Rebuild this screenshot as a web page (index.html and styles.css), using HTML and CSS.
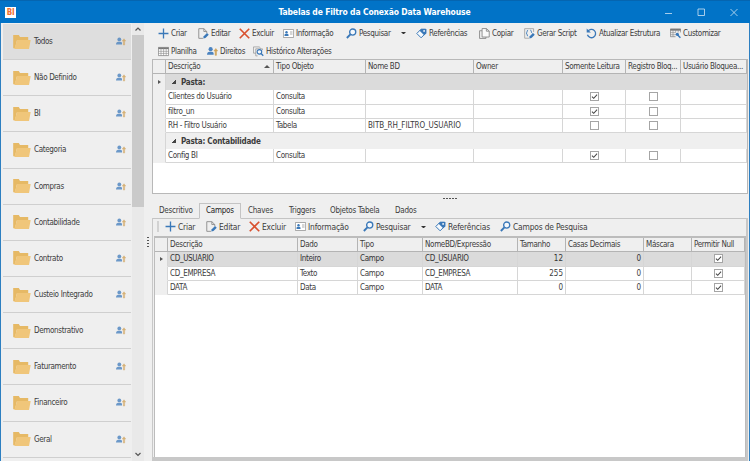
FILE: index.html
```html
<!DOCTYPE html>
<html lang="pt-BR">
<head>
    <meta charset="UTF-8">
    <meta name="viewport" content="width=device-width, initial-scale=1.0">
    <title>Tabelas de Filtro da Conexão Data Warehouse</title>
    <link rel="stylesheet" href="styles.css">
</head>
<body>
    <!-- Icon set -->
    <svg class="sprite" aria-hidden="true">
        <symbol id="folder" viewBox="0 0 18 16">
            <path d="M.2 14.3V1h5.6l1.2 2h8.2v3H4L2 14.3z" fill="#e6b965"/>
            <path d="M4.1 6.1h13.6L16 15H1.3z" fill="#f0c67a"/>
        </symbol>
        <symbol id="rights" viewBox="0 0 10 9">
            <circle cx="3.3" cy="2.4" r="1.9" fill="#4b83c0"/>
            <path d="M0 7.5C0 5.8 1 5 2.2 4.8h2.2c1 .2 1.5.7 1.6 1.3v1.4z" fill="#4b83c0"/>
            <path d="M8 1.8L6.3 4h1.1v4h1.2V4h1.1z" fill="#d0a35a" stroke="#d0a35a" stroke-width=".5"/>
        </symbol>
        <symbol id="plus" viewBox="0 0 10 10">
            <path d="M5 .5v9M.5 5h9" stroke="#3a78b8" stroke-width="1.2"/>
        </symbol>
        <symbol id="edit" viewBox="0 0 10 10">
            <path d="M4.5 9.4H.7V.6h4.6L8 3.2v1.5M5.3.6v2.6H8" fill="none" stroke="#8a8a8a" stroke-width=".8"/>
            <path d="M4.8 9.6l.4-2 3-3 1.6 1.6-3 3z" fill="#3a78b8"/>
        </symbol>
        <symbol id="delete" viewBox="0 0 10 10">
            <path d="M.7.7l8.6 8.6M9.3.7L.7 9.3" stroke="#d9512f" stroke-width="1.5"/>
        </symbol>
        <symbol id="info" viewBox="0 0 11 9">
            <path d="M.4.5h10.2v8H.4z" fill="#fff" stroke="#888" stroke-width=".7"/>
            <circle cx="3.5" cy="3.2" r="1.2" fill="#3a78b8"/>
            <path d="M1.5 7V5.6l1-.8h2l1 .8V7z" fill="#3a78b8"/>
            <path d="M7 3h2.5M7 5h2.5" stroke="#888" stroke-width=".7"/>
        </symbol>
        <symbol id="search" viewBox="0 0 10 10">
            <circle cx="6.1" cy="3.7" r="2.8" fill="#f4f8fc" stroke="#3a78b8" stroke-width="1.2"/>
            <path d="M4 5.8L.8 9.1" stroke="#3a78b8" stroke-width="1.7"/>
        </symbol>
        <symbol id="tag" viewBox="0 0 11 11">
            <path d="M5 1.2L.8 5.5l4.3 4.3 4.6-4.6V1.2z" fill="#f6f9fc" stroke="#3a78b8" stroke-width="1"/>
            <path d="M5.3 1h5v4.5L8.2 7.3 3.6 2.7z" fill="#3a78b8"/>
            <circle cx="8.1" cy="2.9" r=".9" fill="#fff"/>
        </symbol>
        <symbol id="copy" viewBox="0 0 10 10">
            <path d="M2.8 2.5H.5v7h5.8V8.2" fill="none" stroke="#888" stroke-width=".8"/>
            <path d="M2.8.5h4l2.5 2.3v5.4H2.8zM6.7.5v2.4h2.6" fill="#fafafa" stroke="#888" stroke-width=".8"/>
        </symbol>
        <symbol id="script" viewBox="0 0 10 10">
            <path d="M4.5 9.3H.6V.6h8.1v3" fill="none" stroke="#999" stroke-width=".7"/>
            <path d="M3.7 2C2.3 2 3.4 4.2 2 4.7c1.4.4.3 2.6 1.7 2.6M5.8 2c1.4 0 .3 2.2 1.7 2.7" fill="none" stroke="#3a78b8" stroke-width=".9"/>
            <path d="M4.8 9.6l.4-2 3-3 1.6 1.6-3 3z" fill="#3a78b8"/>
        </symbol>
        <symbol id="refresh" viewBox="0 0 10 10">
            <path d="M1.7 3A3.8 3.8 0 1 1 1.3 6.2" fill="none" stroke="#3a78b8" stroke-width="1.2"/>
            <path d="M.6.5v3.7h3.8z" fill="#3a78b8"/>
        </symbol>
        <symbol id="sheet" viewBox="0 0 11 9">
            <path d="M.4.4h10.2v8.2H.4z" fill="#fff" stroke="#777" stroke-width=".7"/>
            <path d="M.4 1.3h10.2" stroke="#777" stroke-width="1.7"/>
            <path d="M.4 4.3h10.2M.4 6.4h10.2M3 1v7.5M5.6 1v7.5M8.2 1v7.5" stroke="#888" stroke-width=".6"/>
        </symbol>
        <symbol id="custom" viewBox="0 0 11 10">
            <path d="M5.5 8.2H.4V.4h10.2v3.5" fill="none" stroke="#777" stroke-width=".7"/>
            <path d="M.4 1.3h10.2" stroke="#777" stroke-width="1.7"/>
            <path d="M.4 4.1h5.3M.4 6.2h5.3M3 1v7M5.6 1v3M8.2 1v3" stroke="#888" stroke-width=".6"/>
            <path d="M7.4 6.3l3 3" stroke="#3a78b8" stroke-width="1.5"/>
            <circle cx="7.3" cy="5.8" r="1.6" fill="#3a78b8"/>
        </symbol>
        <symbol id="history" viewBox="0 0 12 11">
            <path d="M3 7.3H.5V.5h6.3l1.7 1.6M10.3 4V2.6H3v7.7h2" fill="none" stroke="#888" stroke-width=".7"/>
            <circle cx="7" cy="5.9" r="2.5" fill="#f4f8fc" stroke="#3a78b8" stroke-width="1.2"/>
            <path d="M8.8 7.7l2.4 2.5" stroke="#3a78b8" stroke-width="1.5"/>
        </symbol>
    </svg>

    <div class="window">
        <header class="titlebar">
            <span class="logo">BI</span>
            <h1>Tabelas de Filtro da Conexão Data Warehouse</h1>
            <svg class="window-buttons" viewBox="0 0 74 9">
                <path d="M1 5.5h7M34 1h6.5v6.5H34zM66.5 1l7 7M73.5 1l-7 7"/>
            </svg>
        </header>

        <div class="content">
            <nav class="sidebar">
                <div class="folder active"><svg class="folder-icon"><use href="#folder"/></svg><span>Todos</span><svg class="rights-icon"><use href="#rights"/></svg></div>
                <div class="folder"><svg class="folder-icon"><use href="#folder"/></svg><span>Não Definido</span><svg class="rights-icon"><use href="#rights"/></svg></div>
                <div class="folder"><svg class="folder-icon"><use href="#folder"/></svg><span>BI</span><svg class="rights-icon"><use href="#rights"/></svg></div>
                <div class="folder"><svg class="folder-icon"><use href="#folder"/></svg><span>Categoria</span><svg class="rights-icon"><use href="#rights"/></svg></div>
                <div class="folder"><svg class="folder-icon"><use href="#folder"/></svg><span>Compras</span><svg class="rights-icon"><use href="#rights"/></svg></div>
                <div class="folder"><svg class="folder-icon"><use href="#folder"/></svg><span>Contabilidade</span><svg class="rights-icon"><use href="#rights"/></svg></div>
                <div class="folder"><svg class="folder-icon"><use href="#folder"/></svg><span>Contrato</span><svg class="rights-icon"><use href="#rights"/></svg></div>
                <div class="folder"><svg class="folder-icon"><use href="#folder"/></svg><span>Custeio Integrado</span><svg class="rights-icon"><use href="#rights"/></svg></div>
                <div class="folder"><svg class="folder-icon"><use href="#folder"/></svg><span>Demonstrativo</span><svg class="rights-icon"><use href="#rights"/></svg></div>
                <div class="folder"><svg class="folder-icon"><use href="#folder"/></svg><span>Faturamento</span><svg class="rights-icon"><use href="#rights"/></svg></div>
                <div class="folder"><svg class="folder-icon"><use href="#folder"/></svg><span>Financeiro</span><svg class="rights-icon"><use href="#rights"/></svg></div>
                <div class="folder"><svg class="folder-icon"><use href="#folder"/></svg><span>Geral</span><svg class="rights-icon"><use href="#rights"/></svg></div>
            </nav>
            <div class="scrollbar">
                <svg class="arrow" viewBox="0 0 12 12"><path d="M3.5 7.5L6 5l2.5 2.5"/></svg>
                <div class="thumb"></div>
                <svg class="arrow" viewBox="0 0 12 12"><path d="M3.5 4L6 6.5 8.5 4"/></svg>
            </div>
            <div class="splitter"><i></i><i></i><i></i><i></i></div>

            <main class="main">
                <div class="toolbar toolbar-top">
                    <div class="btn"><svg><use href="#plus"/></svg><span>Criar</span></div>
                    <div class="btn"><svg><use href="#edit"/></svg><span>Editar</span></div>
                    <div class="btn"><svg><use href="#delete"/></svg><span>Excluir</span></div>
                    <div class="btn"><svg><use href="#info"/></svg><span>Informação</span></div>
                    <div class="btn"><svg><use href="#search"/></svg><span>Pesquisar</span></div>
                    <div class="caret"></div>
                    <div class="btn"><svg><use href="#tag"/></svg><span>Referências</span></div>
                    <div class="btn"><svg><use href="#copy"/></svg><span>Copiar</span></div>
                    <div class="btn"><svg><use href="#script"/></svg><span>Gerar Script</span></div>
                    <div class="btn"><svg><use href="#refresh"/></svg><span>Atualizar Estrutura</span></div>
                    <div class="btn"><svg><use href="#custom"/></svg><span>Customizar</span></div>
                </div>
                <div class="toolbar toolbar-second">
                    <div class="btn"><svg><use href="#sheet"/></svg><span>Planilha</span></div>
                    <div class="btn"><svg><use href="#rights"/></svg><span>Direitos</span></div>
                    <div class="btn"><svg><use href="#history"/></svg><span>Histórico Alterações</span></div>
                </div>

                <div class="grid grid-filters">
                    <div class="row head">
                        <b></b><b>Descrição<i class="sort"></i></b><b>Tipo Objeto</b><b>Nome BD</b><b>Owner</b><b>Somente Leitura</b><b>Registro Bloq...</b><b>Usuário Bloquea...</b>
                    </div>
                    <div class="group current"><i class="marker"></i><div><i class="expand"></i>Pasta:</div></div>
                    <div class="row"><b></b><b>Clientes do Usuário</b><b>Consulta</b><b></b><b></b><b class="check"><svg class="box on" viewBox="0 0 9 9"><path d="M1.2 4.6L3.5 6.8 7.8 2"/></svg></b><b class="check"><svg class="box"></svg></b><b></b></div>
                    <div class="row"><b></b><b>filtro_un</b><b>Consulta</b><b></b><b></b><b class="check"><svg class="box on" viewBox="0 0 9 9"><path d="M1.2 4.6L3.5 6.8 7.8 2"/></svg></b><b class="check"><svg class="box"></svg></b><b></b></div>
                    <div class="row"><b></b><b>RH - Filtro Usuário</b><b>Tabela</b><b class="code">BITB_RH_FILTRO_USUARIO</b><b></b><b class="check"><svg class="box"></svg></b><b class="check"><svg class="box"></svg></b><b></b></div>
                    <div class="group"><i></i><div><i class="expand"></i>Pasta: Contabilidade</div></div>
                    <div class="row"><b></b><b>Config BI</b><b>Consulta</b><b></b><b></b><b class="check"><svg class="box on" viewBox="0 0 9 9"><path d="M1.2 4.6L3.5 6.8 7.8 2"/></svg></b><b class="check"><svg class="box"></svg></b><b></b></div>
                </div>

                <div class="splitter-h"><i></i><i></i><i></i><i></i><i></i></div>

                <div class="tabs">
                    <span>Descritivo</span><span class="active">Campos</span><span>Chaves</span><span>Triggers</span><span>Objetos Tabela</span><span>Dados</span>
                </div>

                <section class="panel">
                    <div class="toolbar toolbar-fields">
                        <div class="grip"></div>
                        <div class="btn"><svg><use href="#plus"/></svg><span>Criar</span></div>
                        <div class="btn"><svg><use href="#edit"/></svg><span>Editar</span></div>
                        <div class="btn"><svg><use href="#delete"/></svg><span>Excluir</span></div>
                        <div class="btn"><svg><use href="#info"/></svg><span>Informação</span></div>
                        <div class="btn"><svg><use href="#search"/></svg><span>Pesquisar</span></div>
                        <div class="caret"></div>
                        <div class="btn"><svg><use href="#tag"/></svg><span>Referências</span></div>
                        <div class="btn"><svg><use href="#search"/></svg><span>Campos de Pesquisa</span></div>
                    </div>
                    <div class="grid grid-fields">
                        <div class="row head">
                            <b></b><b>Descrição</b><b>Dado</b><b>Tipo</b><b>NomeBD/Expressão</b><b>Tamanho</b><b>Casas Decimais</b><b>Máscara</b><b>Permitir Null</b>
                        </div>
                        <div class="row selected"><b><i class="marker"></i></b><b>CD_USUARIO</b><b>Inteiro</b><b>Campo</b><b>CD_USUARIO</b><b class="num">12</b><b class="num">0</b><b></b><b class="check"><svg class="box on" viewBox="0 0 9 9"><path d="M1.2 4.6L3.5 6.8 7.8 2"/></svg></b></div>
                        <div class="row"><b></b><b>CD_EMPRESA</b><b>Texto</b><b>Campo</b><b>CD_EMPRESA</b><b class="num">255</b><b class="num">0</b><b></b><b class="check"><svg class="box on" viewBox="0 0 9 9"><path d="M1.2 4.6L3.5 6.8 7.8 2"/></svg></b></div>
                        <div class="row"><b></b><b>DATA</b><b>Data</b><b>Campo</b><b>DATA</b><b class="num">0</b><b class="num">0</b><b></b><b class="check"><svg class="box on" viewBox="0 0 9 9"><path d="M1.2 4.6L3.5 6.8 7.8 2"/></svg></b></div>
                    </div>
                </section>
            </main>
        </div>
    </div>
</body>
</html>
```
FILE: styles.css
```css
* {
    margin: 0;
    padding: 0;
    box-sizing: border-box;
}

body {
    font-family: Tahoma, 'DejaVu Sans Condensed', 'DejaVu Sans', sans-serif;
    font-stretch: condensed;
    font-size: 8px;
    letter-spacing: -0.33px;
    color: #3c3c3c;
    overflow: hidden;
}

.sprite {
    display: none;
}

.window {
    width: 750px;
    height: 461px;
    background: #efefef;
    border: solid #2d7fc1;
    border-width: 0 1px;
    display: flex;
    flex-direction: column;
}

/* Title bar */
.titlebar {
    height: 23px;
    margin: 0 -1px;
    background: #0173c7;
    border-top: 1px solid #0565b0;
    display: flex;
    align-items: center;
    padding: 0 12px 0 5px;
    flex: none;
}

.logo {
    width: 11px;
    height: 11px;
    background: #fff;
    color: #f07030;
    font-size: 8px;
    font-weight: bold;
    line-height: 11px;
    text-align: center;
}

.titlebar h1 {
    flex: 1;
    text-align: center;
    padding-left: 69px;
    color: #fff;
    font-size: 8.5px;
    letter-spacing: -0.14px;
}

.window-buttons {
    width: 74px;
    height: 9px;
    fill: none;
    stroke: #cfe3f4;
    stroke-width: 0.8;
}

.content {
    flex: 1;
    display: flex;
    min-height: 0;
}

/* Folder list */
.sidebar {
    width: 131px;
    padding: 1px 1px 0 2px;
}

.folder {
    height: 36.15px;
    border-bottom: 1px solid #cfcfcf;
    display: flex;
    align-items: center;
    padding: 0 5px 0 10px;
}

.folder span {
    flex: 1;
    padding-left: 3px;
}

.folder.active {
    background: #dedede;
}

.folder-icon {
    width: 18px;
    height: 16px;
}

.rights-icon {
    width: 10px;
    height: 9px;
    opacity: 0.8;
}

.scrollbar {
    width: 12px;
    background: #e9e9e9;
    display: flex;
    flex-direction: column;
    justify-content: space-between;
}

.arrow {
    width: 12px;
    height: 12px;
    fill: none;
    stroke: #555;
    stroke-width: 1.2;
}

.thumb {
    height: 172px;
    background: #cacaca;
    margin-bottom: auto;
}

.splitter {
    width: 8px;
    display: flex;
    flex-direction: column;
    justify-content: center;
    align-items: center;
    gap: 1.5px;
}

.splitter i,
.splitter-h i {
    width: 1.5px;
    height: 1.5px;
    background: #555;
}

.main {
    flex: 1;
    display: flex;
    flex-direction: column;
    min-width: 0;
    padding-right: 1px;
}

/* Toolbars */
.toolbar {
    display: grid;
    align-items: center;
    flex: none;
}

.toolbar-top {
    height: 20px;
    padding-left: 6px;
    grid-template-columns: 40px 41px 44px 63px 55px 15px 63px 45px 62px 84px 1fr;
}

.toolbar-second {
    height: 16px;
    padding-left: 6px;
    grid-template-columns: 49px 46px 1fr;
}

.toolbar-fields {
    height: 18px;
    padding: 0 0 1px 4px;
    grid-template-columns: 8px 41px 43px 46px 68px 58px 14px 65px 1fr;
    font-size: 8.4px;
    letter-spacing: -0.18px;
}

.btn {
    display: flex;
    align-items: center;
    gap: 2px;
    white-space: nowrap;
}

.btn svg {
    width: 11px;
    height: 11px;
}

.caret {
    border: solid transparent;
    border-width: 2.5px 2.5px 0;
    border-top-color: #333;
    width: 5px;
}

.grip {
    width: 2px;
    height: 11px;
    background: #d2d2d2;
}

/* Data grids */
.grid {
    background: #fff;
    border: 1px solid #b8b8b8;
}

.grid-filters {
    height: 135px;
}

.row {
    display: grid;
    height: 14.3px;
}

.grid-filters .row {
    grid-template-columns: 13px 108px 92px 108px 89px 63px 55px 1fr;
}

.row b {
    font-weight: normal;
    border: solid #d6d6d6;
    border-width: 0 1px 1px 0;
    padding-left: 2px;
    line-height: 13px;
    white-space: nowrap;
    min-width: 0;
    display: flex;
    align-items: center;
}

.row b:first-child {
    background: #efefef;
    border-bottom-color: #efefef;
    padding-left: 0;
}

.row.head b {
    background: #efefef;
    border-color: #b4b4b4;
}

.row .code {
    letter-spacing: -0.08px;
}

.sort {
    margin: 0 3px 0 auto;
    border: solid transparent;
    border-width: 0 3px 3px;
    border-bottom-color: #555;
}

.row .check {
    justify-content: center;
    padding-left: 0;
}

.row .num {
    justify-content: flex-end;
    padding-right: 2px;
    letter-spacing: 0;
}

.box {
    width: 9px;
    height: 9px;
    border: 1px solid #a5a5a5;
    background: #fff;
    fill: none;
    stroke: #444;
    stroke-width: 1.3;
}

.group {
    height: 16px;
    display: flex;
    font-weight: bold;
    letter-spacing: -0.22px;
}

.group > i {
    width: 13px;
    background: #efefef;
    border-right: 1px solid #d6d6d6;
}

.group > div {
    flex: 1;
    background: #efefef;
    display: flex;
    align-items: center;
    padding-left: 6px;
    gap: 5px;
}

.group.current > div {
    background: #dbdbdb;
}

.marker {
    display: flex;
    align-items: center;
    justify-content: center;
    width: 100%;
}

.marker::before {
    content: '';
    border: solid transparent;
    border-width: 2.5px 0 2.5px 3px;
    border-left-color: #555;
}

.expand {
    width: 4px;
    height: 4px;
    background: linear-gradient(135deg, transparent 50%, #444 50%);
}

/* Horizontal splitter */
.splitter-h {
    height: 9px;
    display: flex;
    justify-content: center;
    align-items: center;
    gap: 1.5px;
}

/* Tabs */
.tabs {
    height: 15px;
    display: grid;
    grid-template-columns: 47px 42px 41px 41px 65px 1fr;
    letter-spacing: -0.24px;
}

.tabs span {
    line-height: 15px;
    padding-left: 7px;
    border-bottom: 1px solid #c4c4c4;
}

.tabs .active {
    border: 1px solid #c4c4c4;
    border-bottom-color: #efefef;
    line-height: 14px;
    padding-left: 6px;
    color: #222;
}

.panel {
    flex: 1;
    display: flex;
    flex-direction: column;
    border: solid #c8c8c8;
    border-width: 0 2px 4px 1px;
}

.grid-fields {
    flex: 1;
    margin: 0 0 0 1px;
    border: solid #bcbcbc;
    border-width: 2px 1px 0 1px;
}

.grid-fields .row {
    grid-template-columns: 13px 130px 60px 65px 95px 48px 78px 48px 1fr;
}

.row.selected b:not(:first-child) {
    background: #dbdbdb;
    color: #333;
}
```
